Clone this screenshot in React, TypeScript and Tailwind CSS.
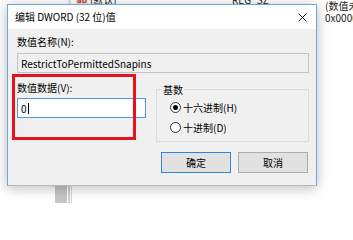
export default function App() {
  return (
    <div className="relative w-[353px] h-[203px] overflow-hidden bg-white font-['Noto_Sans_CJK_SC',sans-serif] text-[10px] leading-[13px] text-black">
      {/* registry list behind the dialog */}
      <div className="absolute left-[68px] top-0 w-[3px] h-[6px] bg-[#e3e3e3]" />
      <div className="absolute left-[76px] top-[-7px] flex items-center gap-[2px] text-[#222]">
        <span className="text-[8px] font-bold text-[#c8402a] bg-[#f3e3df] px-[1px]">ab</span>
        <span>(默认)</span>
      </div>
      <div className="absolute left-[232px] top-[-7px] text-[#222]">REG_SZ</div>
      <div className="absolute left-[325px] top-0 flex flex-col leading-[12px] text-[#222] whitespace-nowrap">
        <span>(数值未设置)</span>
        <span>0x00000000 (0)</span>
      </div>
      <div className="absolute left-[55px] top-[184px] w-[12px] h-[19px] bg-[#c6c6c6]" />
      <div className="absolute left-[68px] top-[184px] w-[2px] h-[19px] bg-[#cfcfcf]" />
      <div className="absolute left-[71px] top-[184px] w-[1px] h-[19px] bg-[#d6d6d6]" />

      {/* dialog */}
      <div className="absolute left-[7px] top-[4px] w-[310px] h-[182px] flex flex-col border border-[#6aa8df] border-b-[#b9b9b9] shadow-[0_2px_12px_rgba(0,0,0,0.28)]">
        <div className="h-[24px] bg-white flex items-center justify-between pl-[7px] pr-[9px] pb-[1px]">
          <span>编辑 DWORD (32 位)值</span>
          <svg width="9" height="9" viewBox="0 0 9 9" className="mt-[1px]">
            <path d="M0.5 0.5 L8.5 8.5 M8.5 0.5 L0.5 8.5" stroke="#111" strokeWidth="1" fill="none" />
          </svg>
        </div>
        <div className="flex-1 bg-[#f0f0f0] pl-[9px] pr-[7px] pt-[6px]">
          <div>数值名称(N):</div>
          <div className="mt-[5px] h-[20px] flex items-center pl-[3px] border border-[#c4c4c4] bg-[#efefef]">
            RestrictToPermittedSnapins
          </div>
          <div className="mt-[8px] flex gap-[10px]">
            <div className="w-[129px]">
              <div>数值数据(V):</div>
              <div className="mt-[4px] h-[20px] flex items-center pl-[3px] border border-[#4a9be2] bg-white">
                <span>0</span>
                <span className="ml-[1px] w-[1px] h-[11px] bg-black" />
              </div>
            </div>
            <fieldset className="mt-[2px] w-[153px] h-[59px] border border-[#dcdcdc] pl-[13px]">
              <legend className="ml-[-8px] px-[1px]">基数</legend>
              <div className="mt-[5px] flex items-center gap-[2px]">
                <span className="w-[11px] h-[11px] rounded-full border border-[#333] bg-white flex items-center justify-center">
                  <span className="w-[5px] h-[5px] rounded-full bg-black" />
                </span>
                <span>十六进制(H)</span>
              </div>
              <div className="mt-[7px] flex items-center gap-[2px]">
                <span className="w-[11px] h-[11px] rounded-full border border-[#333] bg-white" />
                <span>十进制(D)</span>
              </div>
            </fieldset>
          </div>
          <div className="mt-[10px] flex justify-end gap-[7px] pr-[1px]">
            <button className="w-[70px] h-[21px] border border-[#2a86d8] bg-[#e1e1e1] flex items-center justify-center">
              确定
            </button>
            <button className="w-[70px] h-[21px] border border-[#adadad] bg-[#e1e1e1] flex items-center justify-center">
              取消
            </button>
          </div>
        </div>
      </div>

      {/* red annotation box */}
      <div className="absolute left-[12px] top-[74px] w-[124px] h-[66px] border-[3px] border-[#e5131d]" />
    </div>
  )
}
